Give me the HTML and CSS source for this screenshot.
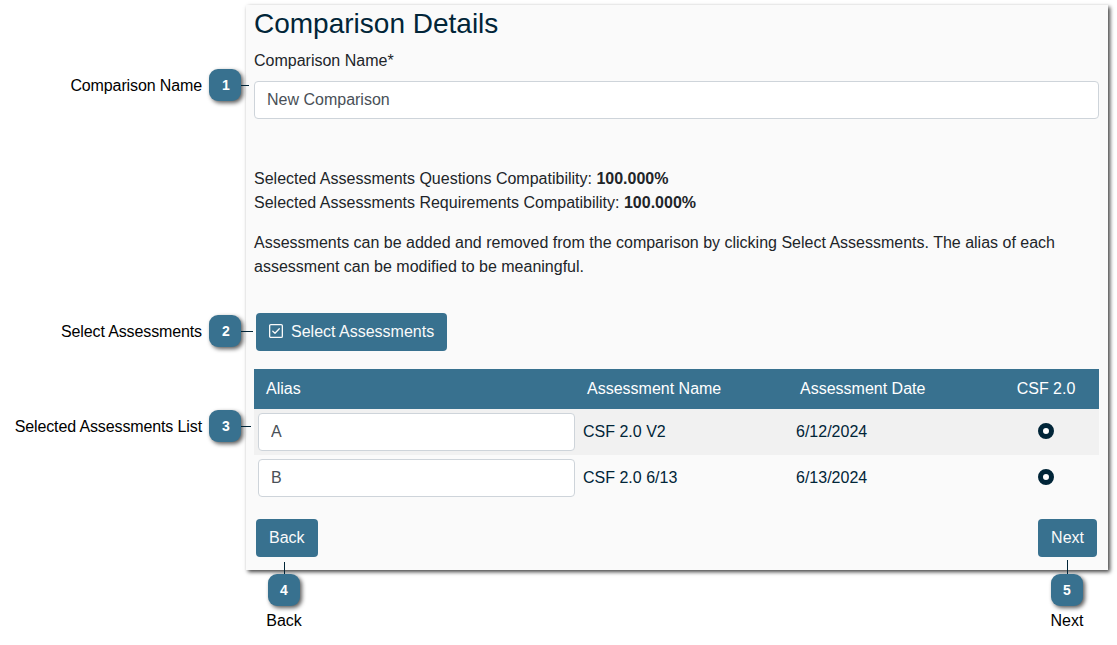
FILE: index.html
```html
<!DOCTYPE html>
<html lang="en">
<head>
<meta charset="utf-8">
<title>Comparison Details</title>
<link rel="stylesheet" href="styles.css">
</head>
<body>
<main class="figure">
  <section class="panel">
    <h1 class="title">Comparison Details</h1>
    <label class="label" for="name">Comparison Name*</label>
    <input class="field" id="name" type="text" value="New Comparison">
    <div class="compat">
      <div>Selected Assessments Questions Compatibility: <b>100.000%</b></div>
      <div>Selected Assessments Requirements Compatibility: <b>100.000%</b></div>
    </div>
    <p class="hint">Assessments can be added and removed from the comparison by clicking Select Assessments. The alias of each assessment can be modified to be meaningful.</p>
    <button class="button select">
      <svg class="check" width="14" height="14" viewBox="0 0 14 14" fill="none" stroke="currentColor" stroke-linecap="round" stroke-linejoin="round"><rect x=".65" y=".65" width="12.7" height="12.7" rx="1.2" stroke-width="1.3"/><path d="M3.8 7.2 6 9.3l4.3-4.5" stroke-width="1.3"/></svg>
      Select Assessments
    </button>
    <div class="table">
      <div class="row head"><span>Alias</span><span>Assessment Name</span><span>Assessment Date</span><span class="center">CSF 2.0</span></div>
      <div class="row striped"><input class="field" type="text" value="A" aria-label="Alias"><span>CSF 2.0 V2</span><span>6/12/2024</span><span class="center"><i class="radio"></i></span></div>
      <div class="row"><input class="field" type="text" value="B" aria-label="Alias"><span>CSF 2.0 6/13</span><span>6/13/2024</span><span class="center"><i class="radio"></i></span></div>
    </div>
    <footer class="actions"><button class="button">Back</button><button class="button">Next</button></footer>
  </section>

  <div class="callout side c1"><span class="caption">Comparison Name</span><span class="badge">1</span><span class="line"></span></div>
  <div class="callout side c2"><span class="caption">Select Assessments</span><span class="badge">2</span><span class="line"></span></div>
  <div class="callout side c3"><span class="caption">Selected Assessments List</span><span class="badge">3</span><span class="line"></span></div>
  <div class="callout below c4"><span class="line"></span><span class="badge">4</span><span class="caption">Back</span></div>
  <div class="callout below c5"><span class="line"></span><span class="badge">5</span><span class="caption">Next</span></div>
</main>
</body>
</html>
```
FILE: styles.css
```css
* { box-sizing: border-box; }
body {
  margin: 0;
  background: #fff;
  color: #212529;
  font: 16px/24px "Liberation Sans", Arial, sans-serif;
}
.figure {
  position: relative;
  height: 645px;
  padding: 5px 9px 0 246px;
  overflow: hidden;
}
.panel {
  height: 565px;
  padding: 2px 9px 0 8px;
  background: #fafafa;
  box-shadow: 2px 2px 4px rgba(0, 0, 0, .75);
}
.title {
  margin: 0 0 9px;
  color: #012538;
  font-size: 28px;
  font-weight: 400;
  line-height: 33px;
}
.label { display: block; margin-bottom: 8px; }
.field {
  display: block;
  width: 100%;
  height: 38px;
  padding: 0 12px;
  border: 1px solid #ced4da;
  border-radius: 4px;
  background: #fff;
  color: #495057;
  font: inherit;
}
.compat { margin-top: 48px; }
.hint { margin: 16px 0 34px; }
.button {
  display: inline-flex;
  align-items: center;
  justify-content: center;
  height: 38px;
  padding: 0 13px;
  border: 0;
  border-radius: 4px;
  background: #38718f;
  color: #fafafa;
  font: inherit;
  white-space: nowrap;
}
.select { display: flex; gap: 8px; margin-left: 2px; }
.check { margin-bottom: 2px; }
.table { margin-top: 18px; color: #012538; }
.row {
  display: grid;
  grid-template-columns: 325px 213px 201px 106px;
  align-items: center;
  height: 46px;
}
.row > span { padding: 0 4px; }
.row .field { width: 317px; margin-left: 4px; }
.row .center { display: flex; justify-content: center; }
.head { height: 40px; background: #38718f; color: #fff; }
.head > span { padding: 0 8px; }
.head > span:first-child { padding-left: 12px; }
.striped { background: #f1f1f1; }
.radio {
  width: 16px;
  height: 16px;
  margin-top: -2px;
  border: 5px solid #012538;
  border-radius: 50%;
  background: #fff;
}
.actions {
  display: flex;
  justify-content: space-between;
  padding: 18px 2px 0;
}

/* Numbered annotations pinned around the panel */
.callout { position: absolute; display: flex; align-items: center; color: #000; }
.caption { white-space: nowrap; }
.badge {
  display: grid;
  place-items: center;
  flex: none;
  width: 32px;
  height: 32px;
  border-radius: 9px;
  background: #38718f;
  box-shadow: 2px 2px 4px rgba(0, 0, 0, .65);
  color: #fff;
  font-size: 14px;
  font-weight: 700;
}
.line { background: #012538; }
.side { left: 0; height: 32px; }
.side .caption {
  width: 202px;
  margin-right: 7px;
  padding-top: 2px;
  letter-spacing: -.12px;
  text-align: right;
}
.side .badge { padding-left: 2px; }
.side .line { width: 8px; height: 1px; }
.c1 { top: 69px; }
.c2 { top: 315px; }
.c2 .line { width: 12px; }
.c3 { top: 410px; }
.c3 .line { width: 10px; }
.below { flex-direction: column; width: 60px; }
.below .line { width: 1px; height: 12px; }
.below .caption { margin-top: 3px; }
.c4 { left: 254px; top: 562px; }
.c5 { left: 1037px; top: 560px; }
.c5 .line { height: 14px; }
```
